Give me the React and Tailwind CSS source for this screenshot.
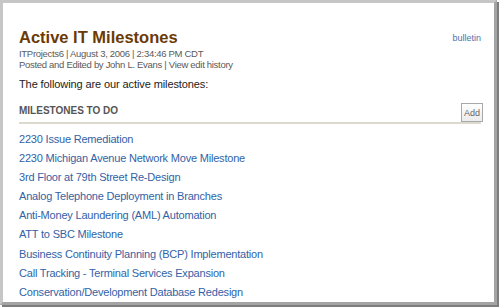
export default function App() {
  const items = [
    "2230 Issue Remediation",
    "2230 Michigan Avenue Network Move Milestone",
    "3rd Floor at 79th Street Re-Design",
    "Analog Telephone Deployment in Branches",
    "Anti-Money Laundering (AML) Automation",
    "ATT to SBC Milestone",
    "Business Continuity Planning (BCP) Implementation",
    "Call Tracking - Terminal Services Expansion",
    "Conservation/Development Database Redesign",
  ];

  return (
    <div className="w-[500px] h-[308px] bg-white overflow-hidden" style={{ fontFamily: '"Liberation Sans", Arial, sans-serif' }}>
      <div className="w-[497px] h-[305px] border-[3px] border-t-[#c6c6c6] border-l-[#c6c6c6] border-r-[#a4a4a4] border-b-[#a4a4a4] shadow-[2px_2px_0_#7d7d7d] overflow-hidden">
        <div className="pl-4 pr-[13px] pt-[25px]">
          {/* Header */}
          <div className="flex justify-between items-start">
            <h1 className="text-[16.5px] font-bold leading-[19px] text-[#6b3a06]">Active IT Milestones</h1>
            <a className="text-[9px] text-[#4a73b2] mt-[4px]">bulletin</a>
          </div>
          <div className="text-[9.5px] leading-[11px] tracking-[-0.3px] text-[#5a5a5a] mt-[1px]">
            <p>ITProjects6 | August 3, 2006 | 2:34:46 PM CDT</p>
            <p>Posted and Edited by John L. Evans | View edit history</p>
          </div>
          <p className="text-[11px] tracking-[-0.1px] text-[#222] mt-[6px] leading-[16px]">The following are our active milestones:</p>

          {/* Section */}
          <div className="mt-[11px] flex items-end justify-between border-b-2 border-[#dcd9cf]">
            <span className="text-[10px] font-bold text-[#555] leading-[12px] mb-[5px]">MILESTONES TO DO</span>
            <button className="text-[9px] text-[#666] border border-[#a8a8a8] bg-gradient-to-b from-white to-[#ececec] w-[22px] h-[19px] leading-[16px] mr-[-2px]">Add</button>
          </div>

          <ul className="mt-[6px]">
            {items.map((t) => (
              <li key={t} className="text-[11px] tracking-[-0.2px] leading-[19.1px] text-[#3262a6]">{t}</li>
            ))}
          </ul>
        </div>
      </div>
    </div>
  );
}
